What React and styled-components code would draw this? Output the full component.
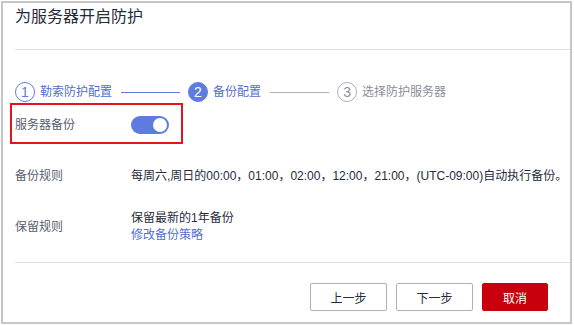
import React from "react";
import styled, { createGlobalStyle } from "styled-components";

const colors = {
  text: "#252b3a",
  label: "#575d6c",
  brand: "#5e7ce0",
  link: "#526ecc",
  muted: "#8a8e99",
  line: "#dfe1e6",
  grey: "#adb0b8",
  red: "#c7000b",
};

const GlobalStyle = createGlobalStyle`
  html, body {
    margin: 0;
    padding: 0;
    background: #fff;
  }
  body {
    font-family: "Liberation Sans", "Noto Sans CJK SC", sans-serif;
    color: ${colors.text};
  }
`;

const steps = [
  { num: 1, label: "勒索防护配置", state: "done" },
  { num: 2, label: "备份配置", state: "active" },
  { num: 3, label: "选择防护服务器", state: "todo" },
];

const App = () => {
  return (
    <>
      <GlobalStyle />
      <Dialog>
        <Header>
          <Title>为服务器开启防护</Title>
        </Header>

        <Steps>
          {steps.map((step, index) => (
            <React.Fragment key={step.num}>
              {index > 0 && <Connector $active={step.state !== "todo"} />}
              <Step>
                <StepCircle $state={step.state}>{step.num}</StepCircle>
                <StepLabel $state={step.state}>{step.label}</StepLabel>
              </Step>
            </React.Fragment>
          ))}
        </Steps>

        <Highlight>
          <Label>服务器备份</Label>
          <Switch>
            <Knob />
          </Switch>
        </Highlight>

        <Row $top={23}>
          <Label>备份规则</Label>
          <Value>每周六,周日的00:00，01:00，02:00，12:00，21:00，(UTC-09:00)自动执行备份。</Value>
        </Row>

        <Row $top={25}>
          <Label>保留规则</Label>
          <Value>
            <div>保留最新的1年备份</div>
            <Link>修改备份策略</Link>
          </Value>
        </Row>

        <Footer>
          <Button>上一步</Button>
          <Button>下一步</Button>
          <Button $primary $width={66}>
            取消
          </Button>
        </Footer>
      </Dialog>
    </>
  );
};

export default App;

const Dialog = styled.div`
  box-sizing: border-box;
  margin: 1px 0 0 1px;
  width: 571px;
  height: 323px;
  border: 2px solid #c6c6c6;
  display: flex;
  flex-direction: column;
  overflow: hidden;
`;

const Header = styled.div`
  box-sizing: border-box;
  height: 47px;
  margin-left: 12px;
  padding-top: 2px;
  border-bottom: 1px solid ${colors.line};
`;

const Title = styled.h1`
  margin: 0;
  font-size: 16px;
  line-height: 24px;
  font-weight: normal;
  color: ${colors.text};
`;

const Steps = styled.div`
  display: flex;
  align-items: center;
  margin: 32px 0 0 12px;
  height: 20px;
`;

const Step = styled.div`
  display: flex;
  align-items: center;
  gap: 5px;
`;

const StepCircle = styled.span`
  box-sizing: border-box;
  width: 20px;
  height: 20px;
  border-radius: 50%;
  display: flex;
  align-items: center;
  justify-content: center;
  font-size: 14px;
  line-height: 1;
  border: 1px solid ${({ $state }) => ($state === "todo" ? colors.grey : colors.brand)};
  background: ${({ $state }) => ($state === "active" ? colors.brand : "#fff")};
  color: ${({ $state }) =>
    $state === "active" ? "#fff" : $state === "todo" ? colors.muted : colors.brand};
`;

const StepLabel = styled.span`
  font-size: 12px;
  line-height: 18px;
  color: ${({ $state }) => ($state === "todo" ? colors.muted : colors.link)};
`;

const Connector = styled.span`
  width: 59px;
  height: 1px;
  margin: 0 8px 0 9px;
  background: ${({ $active }) => ($active ? colors.brand : colors.grey)};
`;

const Highlight = styled.div`
  box-sizing: border-box;
  display: flex;
  align-items: center;
  width: 173px;
  height: 41px;
  margin: 1px 0 0 7px;
  padding: 3px 0 0 3px;
  border: 2px solid #e5141c;
`;

const Row = styled.div`
  display: flex;
  align-items: center;
  margin: ${({ $top }) => $top}px 0 0 12px;
`;

const Label = styled.span`
  flex: 0 0 116px;
  font-size: 12px;
  line-height: 18px;
  color: ${colors.label};
`;

const Value = styled.div`
  font-size: 12px;
  line-height: 17px;
  color: ${colors.text};
  white-space: nowrap;
`;

const Link = styled.div`
  color: ${colors.link};
  cursor: pointer;
`;

const Switch = styled.span`
  box-sizing: border-box;
  width: 38px;
  height: 18px;
  border-radius: 9px;
  background: ${colors.brand};
  display: flex;
  align-items: center;
  justify-content: flex-end;
  padding-right: 2px;
`;

const Knob = styled.span`
  width: 14px;
  height: 14px;
  border-radius: 50%;
  background: #fff;
`;

const Footer = styled.div`
  display: flex;
  justify-content: flex-end;
  gap: 9px;
  margin: 18px 0 0 12px;
  padding: 20px 22px 0 0;
  border-top: 1px solid ${colors.line};
`;

const Button = styled.button`
  box-sizing: border-box;
  width: ${({ $width }) => $width || 77}px;
  height: 28px;
  border-radius: 2px;
  font-family: "Liberation Sans", "Noto Sans CJK SC", sans-serif;
  font-size: 12px;
  padding: 0;
  cursor: pointer;
  border: 1px solid ${({ $primary }) => ($primary ? colors.red : colors.grey)};
  background: ${({ $primary }) => ($primary ? colors.red : "#fff")};
  color: ${({ $primary }) => ($primary ? "#fff" : colors.text)};
`;
